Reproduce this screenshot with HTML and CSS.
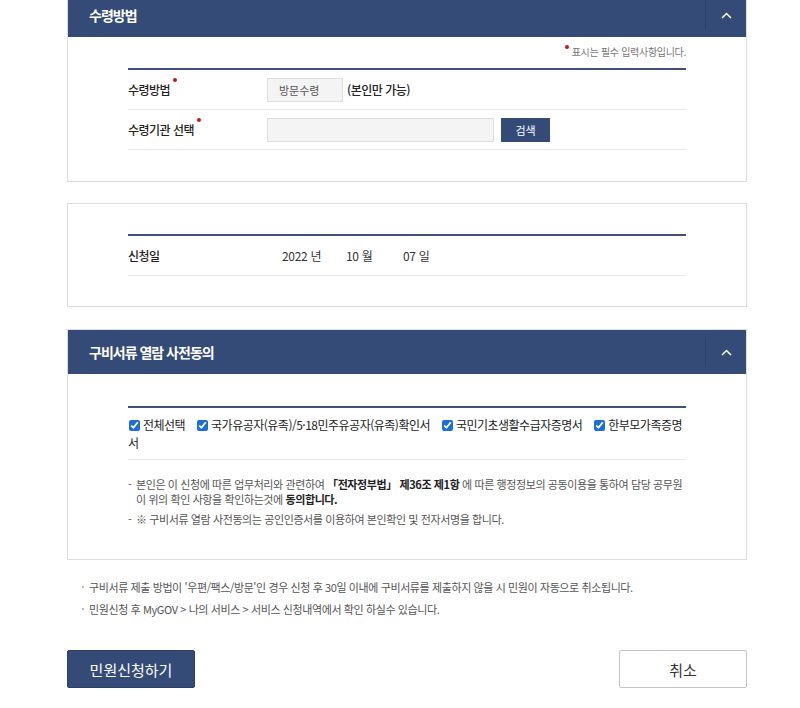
FILE: index.html
```html
<!DOCTYPE html>
<html lang="ko">
  <head>
    <meta charset="UTF-8" />
    <meta name="viewport" content="width=device-width, initial-scale=1.0" />
    <title>민원신청</title>
    <link rel="stylesheet" href="styles.css">
  </head>
  <body>
    <div class="page">
      <section class="panel first">
        <div class="panel-head">
          <h2>수령방법</h2>
          <button class="toggle" type="button" aria-label="접기">
            <svg width="11" height="7" viewBox="0 0 11 7"><path d="M1 6 L5.5 1.5 L10 6" fill="none" stroke="#fff" stroke-width="1.5"/></svg>
          </button>
        </div>
        <div class="panel-body">
          <p class="req-note"><span class="dot"></span>표시는 필수 입력사항입니다.</p>
          <table class="form-table">
            <tr>
              <th><span class="req">수령방법</span></th>
              <td><span class="field short">방문수령</span><span class="extra">(본인만 가능)</span></td>
            </tr>
            <tr>
              <th><span class="req">수령기관 선택</span></th>
              <td><span class="field long"></span><button class="btn-search" type="button">검색</button></td>
            </tr>
          </table>
        </div>
      </section>

      <section class="panel plain">
        <div class="panel-body">
          <table class="form-table">
            <tr>
              <th>신청일</th>
              <td class="date"><span>2022 년</span><span>10 월</span><span>07 일</span></td>
            </tr>
          </table>
        </div>
      </section>

      <section class="panel last">
        <div class="panel-head">
          <h2>구비서류 열람 사전동의</h2>
          <button class="toggle" type="button" aria-label="접기">
            <svg width="11" height="7" viewBox="0 0 11 7"><path d="M1 6 L5.5 1.5 L10 6" fill="none" stroke="#fff" stroke-width="1.5"/></svg>
          </button>
        </div>
        <div class="panel-body agree">
          <div class="check-list">
            <label><input type="checkbox" checked>전체선택</label>
            <label><input type="checkbox" checked>국가유공자(유족)/5·18민주유공자(유족)확인서</label>
            <label><input type="checkbox" checked>국민기초생활수급자증명서</label>
            <label><input type="checkbox" checked>한부모가족증명서</label>
          </div>
          <ul class="agree-notes">
            <li>본인은 이 신청에 따른 업무처리와 관련하여 <b>「전자정부법」 제36조 제1항</b> 에 따른 행정정보의 공동이용을 통하여 담당 공무원이 위의 확인 사항을 확인하는것에 <b>동의합니다.</b></li>
            <li>※ 구비서류 열람 사전동의는 공인인증서를 이용하여 본인확인 및 전자서명을 합니다.</li>
          </ul>
        </div>
      </section>

      <ul class="info">
        <li>구비서류 제출 방법이 '우편/팩스/방문'인 경우 신청 후 30일 이내에 구비서류를 제출하지 않을 시 민원이 자동으로 취소됩니다.</li>
        <li>민원신청 후 MyGOV &gt; 나의 서비스 &gt; 서비스 신청내역에서 확인 하실수 있습니다.</li>
      </ul>

      <div class="actions">
        <button class="btn-primary" type="button">민원신청하기</button>
        <button class="btn-cancel" type="button">취소</button>
      </div>
    </div>
  </body>
</html>
```

FILE: styles.css
```css
body {
  margin: 0;
  background: #fff;
  font-family: "Noto Sans CJK KR", "Noto Sans", "Liberation Sans", sans-serif;
  color: #333;
}
.page {
  width: 680px;
  margin-left: 67px;
  margin-top: -7px;
}
.panel {
  border: 1px solid #ddd;
  background: #fff;
  margin-bottom: 22px;
}
.panel.first {
  border-top: none;
  margin-bottom: 21px;
}
.panel.first .panel-body {
  padding-bottom: 31px;
}
.panel.last {
  margin-bottom: 16px;
}
.panel-head {
  display: flex;
  align-items: center;
  height: 44px;
  background: #344a77;
}
.panel-head h2 {
  flex: 1;
  margin: 0;
  padding-left: 21px;
  font-size: 14px;
  font-weight: 700;
  color: #fff;
  letter-spacing: -1px;
}
.toggle {
  width: 41px;
  height: 30px;
  padding: 0;
  border: none;
  border-left: 1px solid #2c4069;
  background: transparent;
  display: flex;
  align-items: center;
  justify-content: center;
  cursor: pointer;
}
.panel-body {
  padding: 0 60px 30px 60px;
}
.plain .panel-body {
  padding-top: 30px;
}
.req-note {
  margin: 0;
  padding: 8px 0 10px;
  text-align: right;
  font-size: 10px;
  color: #777;
  line-height: 13px;
  letter-spacing: -0.3px;
}
.dot {
  display: inline-block;
  width: 4px;
  height: 4px;
  border-radius: 50%;
  background: #c8161d;
  vertical-align: top;
  margin-right: 3px;
}
.form-table {
  width: 100%;
  border-collapse: collapse;
  border-top: 2px solid #3f5275;
}
.form-table tr {
  border-bottom: 1px solid #eaeaea;
}
.form-table th {
  width: 139px;
  height: 39px;
  padding: 0;
  text-align: left;
  font-size: 12px;
  font-weight: 500;
  letter-spacing: -0.5px;
  color: #222;
}
.form-table td {
  padding: 0;
  font-size: 12px;
}
.req {
  position: relative;
}
.req::after {
  content: "";
  position: absolute;
  right: -7px;
  top: -3px;
  width: 4px;
  height: 4px;
  border-radius: 50%;
  background: #c8161d;
}
.field {
  display: inline-block;
  height: 24px;
  box-sizing: border-box;
  border: 1px solid #dedede;
  background: #f4f4f4;
  vertical-align: middle;
  line-height: 22px;
  font-size: 11px;
  color: #555;
}
.field.short {
  width: 76px;
  padding-left: 11px;
}
.field.long {
  width: 227px;
}
.extra {
  margin-left: 4px;
  font-size: 12px;
  font-weight: 500;
  letter-spacing: -0.5px;
  color: #222;
  vertical-align: middle;
}
.btn-search {
  margin-left: 7px;
  width: 49px;
  height: 24px;
  border: none;
  background: #344a77;
  color: #fff;
  font-family: inherit;
  font-size: 11px;
  vertical-align: middle;
}
.date span {
  display: inline-block;
  font-size: 12px;
  color: #333;
  letter-spacing: -0.3px;
}
.date span:first-child {
  margin-left: 15px;
  width: 64px;
}
.date span:nth-child(2) {
  width: 57px;
}
.agree {
  padding-top: 32px;
  padding-bottom: 27px;
}
.check-list {
  border-top: 2px solid #3f5275;
  border-bottom: 1px solid #eaeaea;
  padding: 8px 0 7px;
  font-size: 12px;
  letter-spacing: -0.5px;
  line-height: 18px;
  color: #222;
}
.check-list label {
  margin-right: 8px;
}
.check-list input {
  width: 11px;
  height: 11px;
  margin: 0 3px 0 1px;
  vertical-align: -1px;
  accent-color: #1a6fd8;
}
.agree-notes {
  list-style: none;
  margin: 17px 0 0;
  padding: 0;
  font-size: 11px;
  letter-spacing: -0.4px;
  line-height: 15px;
  color: #555;
}
.agree-notes li {
  position: relative;
  padding-left: 8px;
  margin-bottom: 5px;
}
.agree-notes li::before {
  content: "-";
  position: absolute;
  left: 0;
}
.agree-notes b {
  color: #222;
}
.info {
  list-style: none;
  margin: 0;
  padding: 0 0 0 15px;
  font-size: 11px;
  letter-spacing: -0.4px;
  line-height: 22px;
  color: #555;
}
.info li {
  position: relative;
  padding-left: 7px;
}
.info li::before {
  content: "";
  position: absolute;
  left: 0;
  top: 10px;
  width: 2px;
  height: 2px;
  background: #bbb;
}
.actions {
  display: flex;
  justify-content: space-between;
  margin-top: 30px;
}
.actions button {
  width: 128px;
  height: 38px;
  font-family: inherit;
  font-size: 15px;
  border-radius: 2px;
}
.btn-primary {
  background: #344a77;
  border: 1px solid #2c3f66;
  color: #fff;
}
.btn-cancel {
  background: #fff;
  border: 1px solid #c4c4c4;
  color: #333;
}
```
